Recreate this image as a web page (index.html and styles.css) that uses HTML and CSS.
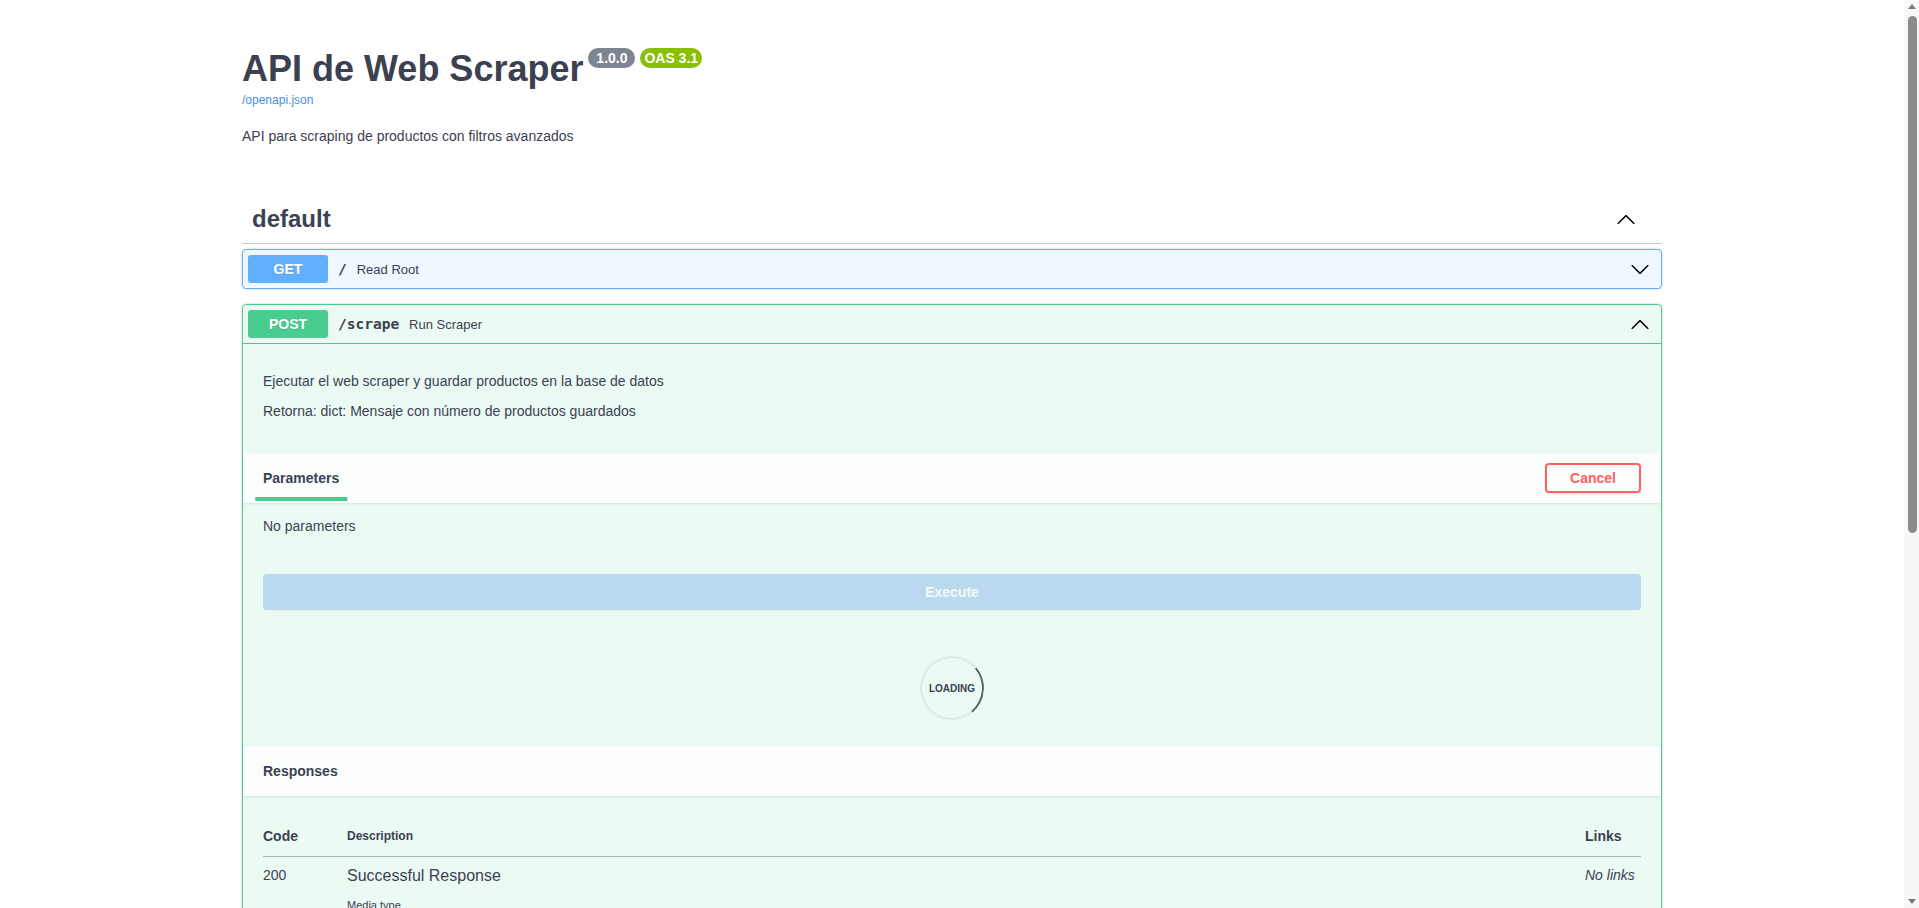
FILE: index.html
```html
<!DOCTYPE html>
<html lang="es">
<head>
<meta charset="utf-8">
<title>API de Web Scraper - Swagger UI</title>
<link rel="stylesheet" href="styles.css">
</head>
<body>
<div class="swagger-ui">
  <div class="wrapper">
    <section class="info">
      <hgroup class="main">
        <h2 class="title">API de Web Scraper<span class="stamps"><small class="stamp"><span class="stamp-text"> 1.0.0 </span></small><small class="stamp stamp-oas"><span class="stamp-text">OAS 3.1</span></small></span></h2>
        <a class="spec-link" href="#"><span class="url">/openapi.json</span></a>
      </hgroup>
      <div class="description"><p>API para scraping de productos con filtros avanzados</p></div>
    </section>
  </div>

  <div class="wrapper">
    <section class="tag-section">
      <h3 class="tag">
        <span class="tag-name">default</span>
        <button class="arrow-btn" aria-label="Collapse operation"><svg viewBox="0 0 20 20" width="20" height="20"><path d="M17.418 14.908c.272.268.709.268.979 0s.271-.701 0-.969l-7.908-7.83c-.27-.268-.707-.268-.979 0l-7.908 7.83c-.27.268-.27.701 0 .969.271.268.709.268.979 0L10 7.767l7.418 7.141z"/></svg></button>
      </h3>

      <div class="op op-get">
        <div class="op-summary">
          <span class="method">GET</span>
          <span class="path">/</span>
          <span class="summary-desc">Read Root</span>
          <button class="arrow-btn" aria-label="Expand"><svg viewBox="0 0 20 20" width="20" height="20"><path d="M17.418 6.109c.272-.268.709-.268.979 0s.271.701 0 .969l-7.908 7.83c-.27.268-.707.268-.979 0l-7.908-7.830c-.27-.268-.27-.701 0-.969.271-.268.709-.268.979 0L10 13.25l7.418-7.141z"/></svg></button>
        </div>
      </div>

      <div class="op op-post">
        <div class="op-summary open">
          <span class="method">POST</span>
          <span class="path">/scrape</span>
          <span class="summary-desc">Run Scraper</span>
          <button class="arrow-btn" aria-label="Collapse"><svg viewBox="0 0 20 20" width="20" height="20"><path d="M17.418 14.908c.272.268.709.268.979 0s.271-.701 0-.969l-7.908-7.830c-.27-.268-.707-.268-.979 0l-7.908 7.830c-.27.268-.27.701 0 .969.271.268.709.268.979 0L10 7.767l7.418 7.141z"/></svg></button>
        </div>
        <div class="op-body">
          <div class="op-desc">
            <p>Ejecutar el web scraper y guardar productos en la base de datos</p>
            <p>Retorna: dict: Mensaje con número de productos guardados</p>
          </div>
          <div class="section-header">
            <div class="tab-header"><h4 class="tab-title"><span>Parameters</span></h4></div>
            <button class="btn btn-cancel">Cancel</button>
          </div>
          <div class="no-params"><p>No parameters</p></div>
          <div class="execute-wrapper"><button class="btn btn-execute" disabled>Execute</button></div>
          <div class="loading-container"><div class="loading"></div></div>
          <div class="section-header"><h4 class="section-title">Responses</h4></div>
          <div class="responses-inner">
            <table class="responses-table">
              <thead>
                <tr>
                  <th class="col-status">Code</th>
                  <th class="col-desc">Description</th>
                  <th class="col-links">Links</th>
                </tr>
              </thead>
              <tbody>
                <tr>
                  <td class="col-status">200</td>
                  <td class="col-desc">
                    <p class="resp-desc">Successful Response</p>
                    <section class="response-controls">
                      <small class="media-title">Media type</small>
                      <div class="select-wrap"><span class="content-type">application/json</span></div>
                      <small class="accept-msg">Controls <code>Accept</code> header.</small>
                    </section>
                    <div class="model-example">
                      <ul class="example-tabs"><li class="ex-tab active">Example Value</li><li class="ex-tab">Schema</li></ul>
                      <pre class="example-code">{
  "additionalProp1": {}
}</pre>
                    </div>
                  </td>
                  <td class="col-links"><i>No links</i></td>
                </tr>
              </tbody>
            </table>
          </div>
        </div>
      </div>
    </section>
  </div>
</div>

<div class="scrollbar" aria-hidden="true">
  <span class="sb-button"><span class="sb-arrow sb-arrow-up"></span></span>
  <span class="sb-track"><span class="sb-thumb"></span></span>
  <span class="sb-button"><span class="sb-arrow sb-arrow-down"></span></span>
</div>
</body>
</html>
```
FILE: styles.css
```css
html {
  box-sizing: border-box;
}
*, *::before, *::after {
  box-sizing: inherit;
}
body {
  margin: 0;
  padding-right: 15px;
  background: #fff;
  font-family: "Liberation Sans", Arial, sans-serif;
  color: #3b4151;
}

/* window scrollbar, drawn over the right edge as in the reference */
.scrollbar {
  position: fixed;
  top: 0;
  right: 0;
  width: 15px;
  height: 100vh;
  display: flex;
  flex-direction: column;
  background: #f8f8f8;
}
.sb-button {
  flex: 0 0 15px;
  display: flex;
  align-items: center;
  justify-content: center;
}
.sb-arrow {
  width: 0;
  height: 0;
  border-left: 4px solid transparent;
  border-right: 4px solid transparent;
}
.sb-arrow-up {
  border-bottom: 5px solid #7a7a7a;
  margin-top: -2px;
}
.sb-arrow-down {
  border-top: 5px solid #7a7a7a;
  margin-top: 2px;
}
.sb-track {
  flex: 1;
  padding: 1px 2px 0 4px;
}
.sb-thumb {
  display: block;
  height: 517px;
  border-radius: 5px;
  background: #8b8b8b;
}

.swagger-ui {
  font-family: "Liberation Sans", Arial, sans-serif;
  color: #3b4151;
  padding-bottom: 40px;
}
.wrapper {
  width: 100%;
  max-width: 1460px;
  margin: 0 auto;
  padding: 0 20px;
}

/* info */
.info {
  margin: 48px 0 51px;
}
.main {
  margin: 0 0 20px;
}
.title {
  margin: 0;
  font-size: 36px;
  font-weight: 700;
  color: #3b4151;
}
.stamp {
  display: inline-block;
  position: relative;
  top: -5px;
  vertical-align: super;
  margin: 0 0 0 5px;
  padding: 2px 4px;
  border-radius: 57px;
  background: #7d8492;
  font-size: 14px;
}
.stamp-oas {
  background: #89bf04;
}
.stamp-text {
  display: block;
  white-space: pre;
  color: #fff;
  font-weight: 700;
}
.spec-link {
  font-size: 12px;
  color: #4990e2;
  text-decoration: none;
}
.description p {
  margin: 0;
  font-size: 14px;
  color: #3b4151;
}

/* tag */
.tag-section {
  display: flex;
  flex-direction: column;
}
.tag {
  display: flex;
  align-items: center;
  margin: 0 0 5px;
  padding: 10px 20px 10px 10px;
  border-bottom: 1px solid rgba(59, 65, 81, .3);
  font-size: 24px;
  font-weight: 700;
  color: #3b4151;
}
.tag-name {
  flex: 1;
}
.arrow-btn {
  display: flex;
  align-items: center;
  padding: 1px 6px;
  border: none;
  background: none;
  cursor: pointer;
}
.arrow-btn svg {
  display: block;
  fill: #000;
}

/* operation blocks */
.op {
  margin: 0 0 15px;
  border: 1px solid #000;
  border-radius: 4px;
  box-shadow: 0 0 3px rgba(0, 0, 0, .19);
}
.op-get {
  border-color: #61affe;
  background: rgba(97, 175, 254, .1);
}
.op-post {
  border-color: #49cc90;
  background: rgba(73, 204, 144, .1);
}
.op-summary {
  display: flex;
  align-items: center;
  padding: 5px;
}
.op-post .op-summary.open {
  border-bottom: 1px solid #49cc90;
}
.method {
  min-width: 80px;
  padding: 6px 0;
  border-radius: 3px;
  text-align: center;
  font-size: 14px;
  font-weight: 700;
  color: #fff;
  text-shadow: 0 1px 0 rgba(0, 0, 0, .1);
}
.op-get .method {
  background: #61affe;
}
.op-post .method {
  background: #49cc90;
}
.path {
  padding: 0 10px;
  font-family: "DejaVu Sans Mono", "Liberation Mono", monospace;
  font-size: 14.5px;
  font-weight: 700;
  color: #3b4151;
}
.summary-desc {
  flex: 1;
  font-size: 13px;
  color: #3b4151;
}

/* body */
.op-desc {
  margin: 0 0 5px;
  padding: 15px 20px;
}
.op-desc p {
  margin: 14px 0;
  font-size: 14px;
}
.section-header {
  display: flex;
  align-items: center;
  min-height: 50px;
  padding: 8px 20px;
  background: rgba(255, 255, 255, .8);
  box-shadow: 0 1px 2px rgba(0, 0, 0, .1);
}
.tab-header {
  flex: 1;
  display: flex;
}
.tab-title,
.section-title {
  margin: 0;
  font-size: 14px;
  font-weight: 700;
  color: #3b4151;
}
.tab-title span {
  position: relative;
}
.tab-title span::after {
  content: "";
  position: absolute;
  bottom: -15px;
  left: 50%;
  width: 120%;
  height: 4px;
  transform: translateX(-50%);
  background: #49cc90;
}
.btn {
  padding: 5px 23px;
  border: 2px solid gray;
  border-radius: 4px;
  background: transparent;
  box-shadow: 0 1px 2px rgba(0, 0, 0, .1);
  font-family: "Liberation Sans", Arial, sans-serif;
  font-size: 14px;
  font-weight: 700;
  color: #3b4151;
}
.btn-cancel {
  border-color: #ff6060;
  color: #ff6060;
}
.no-params {
  margin: 0 0 5px;
  padding: 15px 20px;
}
.no-params p {
  margin: 0;
  font-size: 14px;
}
.execute-wrapper {
  padding: 20px;
}
.btn-execute {
  width: 100%;
  padding: 8px 40px;
  border-color: #4990e2;
  background: #4990e2;
  color: #fff;
  opacity: .3;
}

/* loading */
.loading-container {
  display: flex;
  justify-content: center;
  align-items: center;
  padding: 58px 0;
}
.loading {
  position: relative;
  width: 0;
  height: 0;
}
.loading::before {
  content: "";
  position: absolute;
  top: 0;
  left: 0;
  width: 64px;
  height: 64px;
  margin: -32px;
  border: 2px solid rgba(85, 85, 85, .1);
  border-top-color: rgba(0, 0, 0, .6);
  border-radius: 100%;
  transform: rotate(95deg);
}
.loading::after {
  content: "loading";
  position: absolute;
  top: 0;
  left: 0;
  transform: translate(-50%, -50%);
  font-size: 10px;
  font-weight: 700;
  text-transform: uppercase;
  white-space: nowrap;
  color: #3b4151;
}

/* responses */
.responses-inner {
  padding: 20px;
}
.responses-table {
  width: 100%;
  border-collapse: collapse;
}
.responses-table th {
  padding: 12px 0;
  border-bottom: 1px solid rgba(59, 65, 81, .2);
  text-align: left;
  font-size: 12px;
  font-weight: 700;
  color: #3b4151;
}
.responses-table td {
  padding: 10px 0 0;
  vertical-align: top;
  color: #3b4151;
}
.responses-table .col-status {
  width: 84px;
  font-size: 14px;
}
.responses-table .col-links {
  width: 84px;
  padding-left: 28px;
  font-size: 14px;
}
.resp-desc {
  margin: 0;
  font-size: 16px;
}
.response-controls {
  padding-top: 14px;
}
.media-title {
  display: block;
  margin-bottom: 2px;
  font-size: 11px;
}
.select-wrap {
  display: inline-block;
  margin: 2px 0 4px;
}
.content-type {
  display: inline-block;
  min-width: 160px;
  padding: 5px 40px 5px 10px;
  border: 2px solid #41444e;
  border-radius: 4px;
  background: #f7f7f7;
  box-shadow: 0 1px 2px 0 rgba(0, 0, 0, .25);
  font-size: 14px;
  font-weight: 700;
}
.accept-msg {
  display: block;
  font-size: 11px;
  color: green;
}
.accept-msg code {
  font-family: "Liberation Mono", monospace;
}
.model-example {
  margin: 10px 0 0;
}
.example-tabs {
  display: flex;
  margin: 0 0 6px;
  padding: 0;
  list-style: none;
}
.ex-tab {
  padding-right: 12px;
  font-size: 12px;
  color: #3b4151;
}
.ex-tab.active {
  font-weight: 700;
}
.example-code {
  min-height: 72px;
  margin: 0;
  padding: 6px;
  border-radius: 4px;
  background: #333;
  color: #fff;
  font-family: "Liberation Mono", monospace;
  font-size: 12px;
  font-weight: 700;
}
```
